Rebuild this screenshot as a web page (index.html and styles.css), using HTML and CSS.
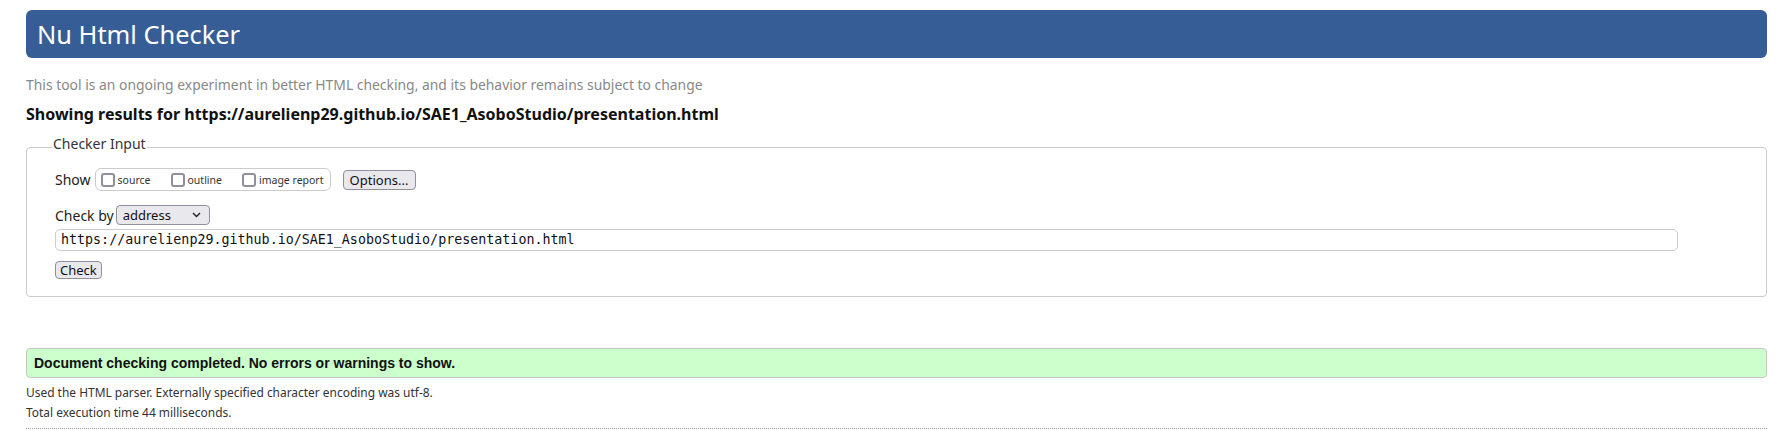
FILE: index.html
```html
<!DOCTYPE html>
<html lang="en">
<head>
<meta charset="utf-8">
<title>Showing results for https://aurelienp29.github.io/SAE1_AsoboStudio/presentation.html - Nu Html Checker</title>
<link rel="stylesheet" href="styles.css">
</head>
<body>
<h1 class="title">Nu Html Checker</h1>
<p class="subtitle">This tool is an ongoing experiment in better HTML checking, and its behavior remains subject to change</p>
<p class="results-for">Showing results for https://aurelienp29.github.io/SAE1_AsoboStudio/presentation.html</p>
<form class="checker-form">
  <fieldset class="checker-input">
    <legend class="legend">Checker Input</legend>
    <div class="show-row">
      <span class="label">Show</span>
      <div class="show-box">
        <label class="opt"><span class="box"></span>source</label>
        <label class="opt"><span class="box"></span>outline</label>
        <label class="opt"><span class="box"></span>image report</label>
      </div>
      <button type="button" class="btn btn-options">Options...</button>
    </div>
    <div class="checkby-row">
      <span class="label">Check by</span>
      <span class="select">address<svg class="chev" width="9" height="6" viewBox="0 0 9 6"><path d="M1 1 L4.5 4.5 L8 1" fill="none" stroke="#222" stroke-width="1.4"/></svg></span>
    </div>
    <div class="url-input">https://aurelienp29.github.io/SAE1_AsoboStudio/presentation.html</div>
    <div class="check-row"><button type="button" class="btn btn-check">Check</button></div>
  </fieldset>
</form>
<div class="success">Document checking completed. No errors or warnings to show.</div>
<p class="details">Used the HTML parser. Externally specified character encoding was utf-8.</p>
<p class="details">Total execution time 44 milliseconds.</p>
<div class="end-line"></div>
</body>
</html>
```

FILE: styles.css
```css
html, body {
  margin: 0;
  background: #fff;
}
body {
  padding: 10px 24px 0 26px;
  font-family: "Noto Sans", "Open Sans", sans-serif;
  color: #222;
}
.title {
  margin: 0;
  height: 48px;
  line-height: 48px;
  padding-left: 11px;
  background: #365d95;
  color: #fff;
  border-radius: 6px;
  font-weight: normal;
  font-size: 25.4px;
}
.subtitle {
  margin: 17px 0 0;
  color: #888;
  font-size: 13.9px;
  line-height: 20px;
}
.results-for {
  margin: 9px 0 0;
  font-weight: bold;
  font-size: 16px;
  line-height: 20px;
  color: #111;
}
.checker-form {
  margin: 11px 0 0;
}
.checker-input {
  margin: 0;
  border: 1px solid #ccc;
  border-radius: 4px;
  padding: 8px 28px 17px 28px;
  min-width: 0;
}
.legend {
  margin-left: -3px;
  padding: 0 1px 7px;
  font-size: 14px;
  line-height: 18px;
  color: #333;
}
.label {
  font-size: 14px;
  color: #222;
}
.show-row {
  display: flex;
  align-items: center;
  gap: 4px;
}
.show-box {
  display: flex;
  align-items: center;
  height: 21px;
  border: 1px solid #ccc;
  border-radius: 6px;
  padding: 0 6px 0 5px;
  gap: 20px;
}
.opt {
  display: flex;
  align-items: center;
  gap: 3px;
  font-size: 10.5px;
  color: #333;
}
.box {
  width: 10px;
  height: 10px;
  border: 2px solid #8f8f9d;
  border-radius: 3px;
  background: #fff;
}
.btn {
  font-family: "Noto Sans", "Open Sans", sans-serif;
  background: #e9e9ed;
  border: 1px solid #8f8f9d;
  border-radius: 4px;
  color: #111;
  padding: 0 5px;
  font-size: 13px;
  line-height: 18px;
  height: 20px;
}
.btn-options {
  margin-left: 8px;
  width: 73px;
}
.checkby-row {
  display: flex;
  align-items: center;
  gap: 2px;
  margin-top: 14px;
}
.select {
  display: flex;
  align-items: center;
  justify-content: space-between;
  box-sizing: border-box;
  width: 94px;
  height: 20px;
  padding: 0 8px 0 6px;
  background: #e9e9ed;
  border: 1px solid #8f8f9d;
  border-radius: 4px;
  font-size: 13px;
  color: #111;
}
.chev {
  display: block;
}
.url-input {
  box-sizing: border-box;
  width: 1623px;
  height: 22px;
  margin-top: 4px;
  padding: 0 5px;
  border: 1px solid #ccc;
  border-radius: 5px;
  font-family: "DejaVu Sans Mono", monospace;
  font-size: 13.33px;
  line-height: 20px;
  color: #111;
}
.check-row {
  display: flex;
  margin-top: 10px;
}
.btn-check {
  height: 18px;
  line-height: 16px;
  padding: 0 4px;
}
.success {
  margin-top: 51px;
  box-sizing: border-box;
  height: 30px;
  line-height: 28px;
  padding-left: 7px;
  background: #ccffcc;
  border: 1px solid #c7c7c7;
  border-radius: 4px;
  font-family: "Liberation Sans", Arial, sans-serif;
  font-weight: bold;
  font-size: 14px;
  color: #111;
}
.details {
  margin: 0;
  font-size: 11.95px;
  line-height: 20px;
  color: #333;
}
.success + .details {
  margin-top: 5px;
}
.end-line {
  margin-top: 5px;
  border-top: 1px dotted #999;
}
```
